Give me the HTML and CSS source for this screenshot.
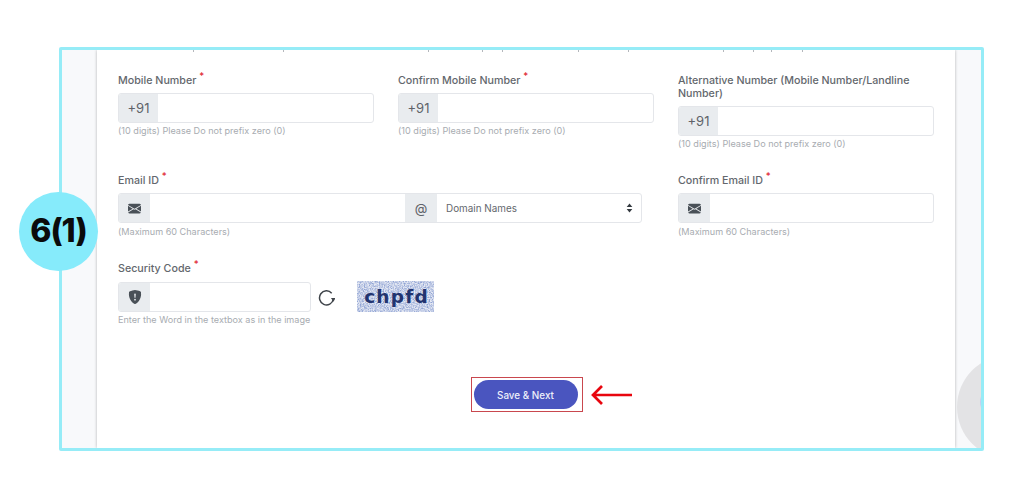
FILE: index.html
```html
<!DOCTYPE html>
<html lang="en">
<head>
    <meta charset="UTF-8">
    <meta name="viewport" content="width=device-width, initial-scale=1.0">
    <title>Contact Details</title>
    <link rel="stylesheet" href="styles.css">
</head>
<body>
    <div class="frame">
        <div class="card">
            <div class="form-row">
                <div class="field">
                    <label class="label">Mobile Number <sup class="req">*</sup></label>
                    <div class="input-group">
                        <span class="addon addon-wide">+91</span>
                        <input class="control" type="text">
                    </div>
                    <div class="hint">(10 digits) Please Do not prefix zero (0)</div>
                </div>
                <div class="field">
                    <label class="label">Confirm Mobile Number <sup class="req">*</sup></label>
                    <div class="input-group">
                        <span class="addon addon-wide">+91</span>
                        <input class="control" type="text">
                    </div>
                    <div class="hint">(10 digits) Please Do not prefix zero (0)</div>
                </div>
                <div class="field">
                    <label class="label">Alternative Number (Mobile Number/Landline Number)</label>
                    <div class="input-group">
                        <span class="addon addon-wide">+91</span>
                        <input class="control" type="text">
                    </div>
                    <div class="hint">(10 digits) Please Do not prefix zero (0)</div>
                </div>
            </div>

            <div class="form-row form-row-email">
                <div class="field field-email">
                    <label class="label">Email ID <sup class="req">*</sup></label>
                    <div class="input-group">
                        <span class="addon">
                            <svg class="icon" viewBox="0 0 16 16"><path d="M.05 3.555A2 2 0 0 1 2 2h12a2 2 0 0 1 1.95 1.555L8 8.414.05 3.555ZM0 4.697v7.104l5.803-3.558L0 4.697ZM6.761 8.83l-6.57 4.027A2 2 0 0 0 2 14h12a2 2 0 0 0 1.808-1.144l-6.57-4.027L8 9.586l-1.239-.757Zm3.436-.586L16 11.801V4.697l-5.803 3.546Z"/></svg>
                        </span>
                        <input class="control" type="text">
                        <span class="addon addon-at">@</span>
                        <div class="select-box">
                            <span>Domain Names</span>
                            <svg class="carets" viewBox="0 0 8 12"><path d="M4 0.5 7.4 4.8H.6ZM4 11.5.6 7.2H7.4Z"/></svg>
                        </div>
                    </div>
                    <div class="hint">(Maximum 60 Characters)</div>
                </div>
                <div class="field">
                    <label class="label">Confirm Email ID <sup class="req">*</sup></label>
                    <div class="input-group">
                        <span class="addon">
                            <svg class="icon" viewBox="0 0 16 16"><path d="M.05 3.555A2 2 0 0 1 2 2h12a2 2 0 0 1 1.95 1.555L8 8.414.05 3.555ZM0 4.697v7.104l5.803-3.558L0 4.697ZM6.761 8.83l-6.57 4.027A2 2 0 0 0 2 14h12a2 2 0 0 0 1.808-1.144l-6.57-4.027L8 9.586l-1.239-.757Zm3.436-.586L16 11.801V4.697l-5.803 3.546Z"/></svg>
                        </span>
                        <input class="control" type="text">
                    </div>
                    <div class="hint">(Maximum 60 Characters)</div>
                </div>
            </div>

            <div class="security">
                <label class="label">Security Code <sup class="req">*</sup></label>
                <div class="security-line">
                    <div class="input-group security-input">
                        <span class="addon">
                            <svg class="icon icon-shield" viewBox="0 0 16 16"><path d="M8 0c-.69 0-1.843.265-2.928.56-1.11.3-2.229.655-2.887.87a1.54 1.54 0 0 0-1.044 1.262c-.596 4.477.787 7.795 2.465 9.99a11.777 11.777 0 0 0 2.517 2.453c.386.273.744.482 1.048.625.28.132.581.24.829.24s.548-.108.829-.24a7.159 7.159 0 0 0 1.048-.625 11.775 11.775 0 0 0 2.517-2.453c1.678-2.195 3.061-5.513 2.465-9.99a1.541 1.541 0 0 0-1.044-1.263 62.467 62.467 0 0 0-2.887-.87C9.843.266 8.69 0 8 0zm-.55 8.502L7.1 4.995a.905.905 0 1 1 1.8 0l-.35 3.507a.552.552 0 0 1-1.1 0zM8.002 12a1 1 0 1 1 0-2 1 1 0 0 1 0 2z"/></svg>
                        </span>
                        <input class="control" type="text">
                    </div>
                    <svg class="refresh" viewBox="0 0 16 16"><path class="refresh-arc" d="M12.9 3.9A6.6 6.6 0 1 0 14.5 9.6"/><path class="refresh-head" d="M12.2 8.4H16.6L14.6 12Z"/></svg>
                    <div class="captcha">
                        <svg class="captcha-noise" viewBox="0 0 77 31" preserveAspectRatio="none">
                            <filter id="speckle"><feTurbulence type="fractalNoise" baseFrequency="0.8" numOctaves="2" seed="4"/><feColorMatrix values="0 0 0 0 0.28  0 0 0 0 0.37  0 0 0 0 0.66  1.8 1.8 0 0 -1.42"/></filter>
                            <rect width="77" height="31" fill="#e4e8f3"/>
                            <rect width="77" height="31" filter="url(#speckle)"/>
                        </svg>
                        <span class="captcha-word">chpfd</span>
                    </div>
                </div>
                <div class="hint">Enter the Word in the textbox as in the image</div>
            </div>

            <div class="actions">
                <div class="highlight">
                    <button class="save-btn">Save &amp; Next</button>
                    <svg class="pointer" viewBox="0 0 42 22"><path d="M41 11H3M11 2 2 11l9 9"/></svg>
                </div>
            </div>
        </div>
        <div class="help-bubble"></div>
    </div>
    <div class="step-badge">6(1)</div>
</body>
</html>
```

FILE: styles.css
```css
* {
    box-sizing: border-box;
}

body {
    margin: 0;
    background-color: #fff;
    font-family: Inter, "Liberation Sans", sans-serif;
    color: #63676d;
}

.frame {
    position: relative;
    width: 925px;
    height: 404px;
    margin: 47px 0 0 59px;
    padding: 0 26px 0 35px;
    border: 3px solid #96ecf7;
    border-radius: 2px;
    background-color: #f8f9fb;
    overflow: hidden;
}

.card {
    position: relative;
    height: 100%;
    padding: 24px 21px 0;
    background-color: #fff;
    box-shadow: 0 0 3px rgba(0, 0, 0, 0.28);
}

/* cut-off descenders of the text scrolled out above the form */
.card::before {
    content: "";
    position: absolute;
    top: 0;
    left: 0;
    width: 100%;
    height: 2px;
    background-image:
        linear-gradient(#b4b7bc, #b4b7bc), linear-gradient(#b4b7bc, #b4b7bc),
        linear-gradient(#b4b7bc, #b4b7bc), linear-gradient(#b4b7bc, #b4b7bc),
        linear-gradient(#b4b7bc, #b4b7bc), linear-gradient(#b4b7bc, #b4b7bc),
        linear-gradient(#b4b7bc, #b4b7bc), linear-gradient(#b4b7bc, #b4b7bc),
        linear-gradient(#b4b7bc, #b4b7bc), linear-gradient(#b4b7bc, #b4b7bc),
        linear-gradient(#b4b7bc, #b4b7bc);
    background-size: 1px 2px;
    background-repeat: no-repeat;
    background-position: 96px 0, 186px 0, 331px 0, 385px 0, 405px 0, 481px 0, 531px 0, 626px 0, 656px 0, 674px 0, 705px 0;
}

.form-row {
    display: grid;
    grid-template-columns: repeat(3, 256px);
    grid-column-gap: 24px;
    margin-bottom: 24px;
}

.form-row-email .hint {
    margin-top: 3px;
}

.field-email {
    grid-column: span 2;
    padding-right: 12px;
}

.label {
    display: block;
    margin-bottom: 6px;
    font-size: 10.7px;
    line-height: 13px;
    font-weight: 500;
}

.req {
    color: #e0242f;
    font-size: 9.5px;
    line-height: 0;
}

.input-group {
    display: flex;
    height: 30px;
    border: 1px solid #e4e6ea;
    border-radius: 3px;
    background-color: #fff;
    overflow: hidden;
}

.addon {
    display: flex;
    flex: 0 0 31px;
    align-items: center;
    justify-content: center;
    background-color: #e9ecef;
    font-size: 13px;
    color: #5f6369;
}

.addon-wide {
    flex-basis: 39px;
}

.addon-at {
    flex-basis: 32px;
}

.icon {
    width: 13px;
    height: 13px;
    fill: #495057;
}

.icon-shield {
    width: 14px;
    height: 14px;
}

.control {
    flex: 1;
    min-width: 0;
    border: none;
    outline: none;
    background: none;
}

.select-box {
    display: flex;
    flex: 0 0 204px;
    align-items: center;
    justify-content: space-between;
    padding: 0 8px 0 9px;
    font-size: 9.9px;
    color: #63676d;
}

.carets {
    width: 7px;
    height: 10px;
    fill: #343a40;
}

.hint {
    margin-top: 2px;
    font-size: 9.1px;
    line-height: 12px;
    color: #a8acb1;
}

.security-line {
    display: flex;
    align-items: center;
}

.security-input {
    width: 193px;
}

.refresh {
    width: 17px;
    height: 17px;
    margin: 1px 0 0 7px;
}

.refresh-arc {
    fill: none;
    stroke: #3f444a;
    stroke-width: 1.4;
}

.refresh-head {
    fill: #3f444a;
}

.captcha {
    position: relative;
    width: 77px;
    height: 31px;
    margin-left: 22px;
    overflow: hidden;
}

.captcha-noise {
    display: block;
    width: 100%;
    height: 100%;
}

.captcha-word {
    position: absolute;
    top: 0;
    left: 0;
    width: 100%;
    padding-left: 2px;
    font-family: "DejaVu Sans", sans-serif;
    font-size: 18.5px;
    font-weight: 700;
    line-height: 31px;
    letter-spacing: 1.2px;
    text-align: center;
    color: #22346f;
}

.actions {
    display: flex;
    justify-content: center;
    margin-top: 51px;
}

.highlight {
    position: relative;
    margin-left: 2px;
    padding: 2px 4.5px 2px 1.5px;
    border: 1.5px solid #c9474e;
}

.save-btn {
    display: block;
    width: 104px;
    height: 29px;
    border: none;
    border-radius: 15px;
    background-color: #4a55bf;
    color: #eef0fa;
    font-family: Inter, "Liberation Sans", sans-serif;
    font-size: 9.9px;
    font-weight: 500;
}

.pointer {
    position: absolute;
    top: 6px;
    left: 118.5px;
    width: 42px;
    height: 22px;
    fill: none;
    stroke: #e8060f;
    stroke-width: 2.7;
}

.help-bubble {
    position: absolute;
    top: 305px;
    left: 895px;
    width: 104px;
    height: 104px;
    border-radius: 50%;
    background-color: #e3e3e5;
}

.help-bubble::before {
    content: "";
    position: absolute;
    top: 32px;
    left: 23px;
    width: 30px;
    height: 30px;
    border-radius: 50%;
    background-color: #c4cdf0;
}

.step-badge {
    position: absolute;
    top: 192px;
    left: 19px;
    width: 79px;
    height: 79px;
    border-radius: 50%;
    background-color: #86ebfb;
    color: #0b0b0b;
    font-family: Inter, sans-serif;
    font-size: 32px;
    font-weight: 800;
    line-height: 77px;
    letter-spacing: -1px;
    text-align: center;
}
```
